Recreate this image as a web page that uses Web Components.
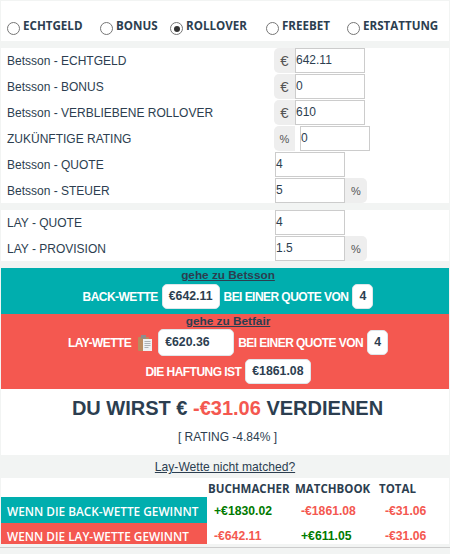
<!DOCTYPE html>
<html>
<head>
<meta charset="utf-8">
<style>
html, body { margin: 0; padding: 0; background: #f2f4f3; }
body { font-family: "Liberation Sans", Arial, sans-serif; color: #2c3e50; width: 450px; height: 554px; overflow: hidden; }
</style>
</head>
<body>
<calc-panel style="margin-top:1px;height:40px"><mode-bar></mode-bar></calc-panel>
<calc-panel style="margin-top:7px;height:155px">
  <form-row label="Betsson - ECHTGELD" value="642.11" before="€"></form-row>
  <form-row label="Betsson - BONUS" value="0" before="€"></form-row>
  <form-row label="Betsson - VERBLIEBENE ROLLOVER" value="610" before="€"></form-row>
  <form-row label="ZUKÜNFTIGE RATING" value="0" before="%" gap></form-row>
  <form-row label="Betsson - QUOTE" value="4"></form-row>
  <form-row label="Betsson - STEUER" value="5" after="%"></form-row>
</calc-panel>
<calc-panel style="margin-top:7px;height:51px">
  <form-row label="LAY - QUOTE" value="4"></form-row>
  <form-row label="LAY - PROVISION" value="1.5" after="%"></form-row>
</calc-panel>
<bet-band color="#00aeae" style="margin-top:7px;height:46px" link="gehe zu Betsson">
  <bet-line>BACK-WETTE <val-box>€642.11</val-box> BEI EINER QUOTE VON <val-box>4</val-box></bet-line>
</bet-band>
<bet-band color="#f45850" style="height:75px" link="gehe zu Betfair">
  <bet-line>LAY-WETTE <clip-icon></clip-icon> <val-box wide>€620.36</val-box> BEI EINER QUOTE VON <val-box>4</val-box></bet-line>
  <bet-line>DIE HAFTUNG IST <val-box>€1861.08</val-box></bet-line>
</bet-band>
<result-box></result-box>
<result-table></result-table>

<script>
class CalcPanel extends HTMLElement {
  constructor() {
    super();
    this.attachShadow({mode:'open'});
    this.shadowRoot.innerHTML = `<style>
      :host { display:block; background:#fff; margin:0 1px; box-sizing:border-box; }
    </style><slot></slot>`;
  }
}
customElements.define('calc-panel', CalcPanel);

class ModeBar extends HTMLElement {
  constructor() {
    super();
    this.attachShadow({mode:'open'});
    const modes = [['ECHTGELD',93],['BONUS',70],['ROLLOVER',96],['FREEBET',81],['ERSTATTUNG',90]];
    this.shadowRoot.innerHTML = `<style>
      :host { display:flex; padding:17px 0 0 6px; font:700 11.6px "Open Sans", sans-serif; color:#2c3e50; }
      .m { display:flex; align-items:flex-start; flex:none; }
      .r { width:11px; height:11px; border:1px solid #767676; border-radius:50%; margin:4px 3px 0 0; position:relative; background:#fff; flex:none; }
      .on::after { content:""; position:absolute; left:2.5px; top:2.5px; width:6px; height:6px; border-radius:50%; background:#333; }
      span { line-height:16px; }
    </style>` + modes.map(([t,w]) =>
      `<div class="m" style="width:${w}px"><i class="r ${t=='ROLLOVER'?'on':''}"></i><span>${t}</span></div>`).join('');
  }
}
customElements.define('mode-bar', ModeBar);

class FormRow extends HTMLElement {
  constructor() {
    super();
    this.attachShadow({mode:'open'});
    const before = this.getAttribute('before'), after = this.getAttribute('after');
    const gap = this.hasAttribute('gap');
    const small = s => s == '%' ? 'pct' : '';
    this.shadowRoot.innerHTML = `<style>
      :host { display:flex; height:26px; align-items:flex-start; font:12px "Liberation Sans", sans-serif; color:#2c3e50; }
      label { width:273px; padding:5px 0 0 6px; box-sizing:border-box; line-height:16px; flex:none; }
      .add { width:21px; height:25px; background:#eee; display:flex; align-items:center; justify-content:center; font-size:15px; color:#555; flex:none; box-sizing:border-box; }
      .add.pct { font-size:11px; }
      .b { border-radius:5px 0 0 5px; }
      .a { border-radius:0 5px 5px 0; width:22px; }
      .box { width:70px; height:25px; border:1px solid #ccc; box-sizing:border-box; padding:0; line-height:23px; font-size:12px; color:#2c3e50; flex:none; background:#fff; }
      .gap { margin-left:5px; }
      .lead { margin-left:1px; }
    </style>
    <label>${this.getAttribute('label')}</label>
    ${before ? `<div class="add b ${small(before)}">${before}</div>` : ''}
    <div class="box ${gap ? 'gap' : ''} ${before ? '' : 'lead'}">${this.getAttribute('value')}</div>
    ${after ? `<div class="add a ${small(after)}">${after}</div>` : ''}`;
  }
}
customElements.define('form-row', FormRow);

class BetBand extends HTMLElement {
  constructor() {
    super();
    this.attachShadow({mode:'open'});
    this.shadowRoot.innerHTML = `<style>
      :host { display:block; margin:0 1px; padding-left:8px; background:${this.getAttribute('color')}; text-align:center; }
      a { display:block; margin-left:-2px; font:700 11.8px/14px "Liberation Sans", sans-serif; color:#2c3e50; text-decoration:underline; }
    </style><a>${this.getAttribute('link')}</a><slot></slot>`;
  }
}
customElements.define('bet-band', BetBand);

class BetLine extends HTMLElement {
  constructor() {
    super();
    this.attachShadow({mode:'open'});
    this.shadowRoot.innerHTML = `<style>
      :host { display:flex; justify-content:center; align-items:center; gap:2px; height:29px; font:700 12px "Liberation Sans", sans-serif; letter-spacing:-.55px; color:#fff; white-space:nowrap; }
    </style><slot></slot>`;
  }
}
customElements.define('bet-line', BetLine);

class ValBox extends HTMLElement {
  constructor() {
    super();
    this.attachShadow({mode:'open'});
    this.shadowRoot.innerHTML = `<style>
      :host { display:inline-block; background:#fff; border:1px solid #dfe6ea; border-radius:5px; height:25px; padding:0 6px; box-sizing:border-box; font:700 12.3px/23px "Liberation Sans", sans-serif; letter-spacing:0; color:#2c3e50; margin:0 2px; text-align:center; min-width:21px; }
      :host([wide]) { width:76px; height:27px; line-height:25px; text-align:left; }
    </style><slot></slot>`;
  }
}
customElements.define('val-box', ValBox);

class ClipIcon extends HTMLElement {
  constructor() {
    super();
    this.attachShadow({mode:'open'});
    this.shadowRoot.innerHTML = `<style>
      :host { display:inline-flex; margin:0 2px 0 5px; }
    </style>
    <svg width="14" height="16" viewBox="0 0 14 16">
      <rect x="0" y="2" width="11" height="14" rx="1" fill="#b98a5e"/>
      <rect x="3" y="0" width="5" height="3.5" fill="#8d8d8d"/>
      <rect x="5" y="4" width="9" height="12" fill="#eef0f2"/>
      <path d="M6.5 6.5h6M6.5 8.5h6M6.5 10.5h6M6.5 12.5h4" stroke="#adb1b4" stroke-width="1"/>
    </svg>`;
  }
}
customElements.define('clip-icon', ClipIcon);

class ResultBox extends HTMLElement {
  constructor() {
    super();
    this.attachShadow({mode:'open'});
    this.shadowRoot.innerHTML = `<style>
      :host { display:block; margin:0 1px; padding-left:5px; height:66px; background:#fff; text-align:center; color:#2c3e50; font-family:"Liberation Sans", sans-serif; }
      h2 { margin:0; padding-top:7px; font-size:20px; line-height:24px; font-weight:700; }
      h2 span { color:#f45850; }
      p { margin:10px 0 0; font-size:12px; line-height:15px; }
    </style>
    <h2>DU WIRST € <span>-€31.06</span> VERDIENEN</h2>
    <p>[ RATING -4.84% ]</p>`;
  }
}
customElements.define('result-box', ResultBox);

class ResultTable extends HTMLElement {
  constructor() {
    super();
    this.attachShadow({mode:'open'});
    this.shadowRoot.innerHTML = `<style>
      :host { display:block; color:#2c3e50; }
      .q { height:23px; text-align:center; font:12.1px/24px "Liberation Sans", sans-serif; }
      .q a { text-decoration:underline; }
      .t { margin:0 1px; background:#fff; height:66px; display:grid; grid-template-columns:206px 87px 84px 1fr; grid-template-rows:19px 26px 21px; align-items:center; }
      .h { font:700 11.5px "Open Sans", sans-serif; padding:2px 0 0 1px; }
      .l { align-self:stretch; display:flex; align-items:center; padding:1px 0 0 6px; color:#fff; font:600 11.8px/16px "Open Sans", sans-serif; }
      .v { font:700 12.2px/16px "Liberation Sans", sans-serif; padding:1px 0 0 7px; }
      .low { align-self:start; box-sizing:border-box; height:21px; padding-top:5px; align-items:flex-start; }
      .g { color:#007a00; } .r { color:#f45850; }
      .rule { margin-top:3px; height:1px; background:#ccc; }
    </style>
    <div class="q"><a>Lay-Wette nicht matched?</a></div>
    <div class="t">
      <div></div><div class="h">BUCHMACHER</div><div class="h">MATCHBOOK</div><div class="h">TOTAL</div>
      <div class="l" style="background:#00aeae">WENN DIE BACK-WETTE GEWINNT</div><div class="v g">+€1830.02</div><div class="v r">-€1861.08</div><div class="v r">-€31.06</div>
      <div class="l low" style="background:#f45850">WENN DIE LAY-WETTE GEWINNT</div><div class="v r low">-€642.11</div><div class="v g low">+€611.05</div><div class="v r low">-€31.06</div>
    </div>
    <div class="rule"></div>`;
  }
}
customElements.define('result-table', ResultTable);
</script>
</body>
</html>
